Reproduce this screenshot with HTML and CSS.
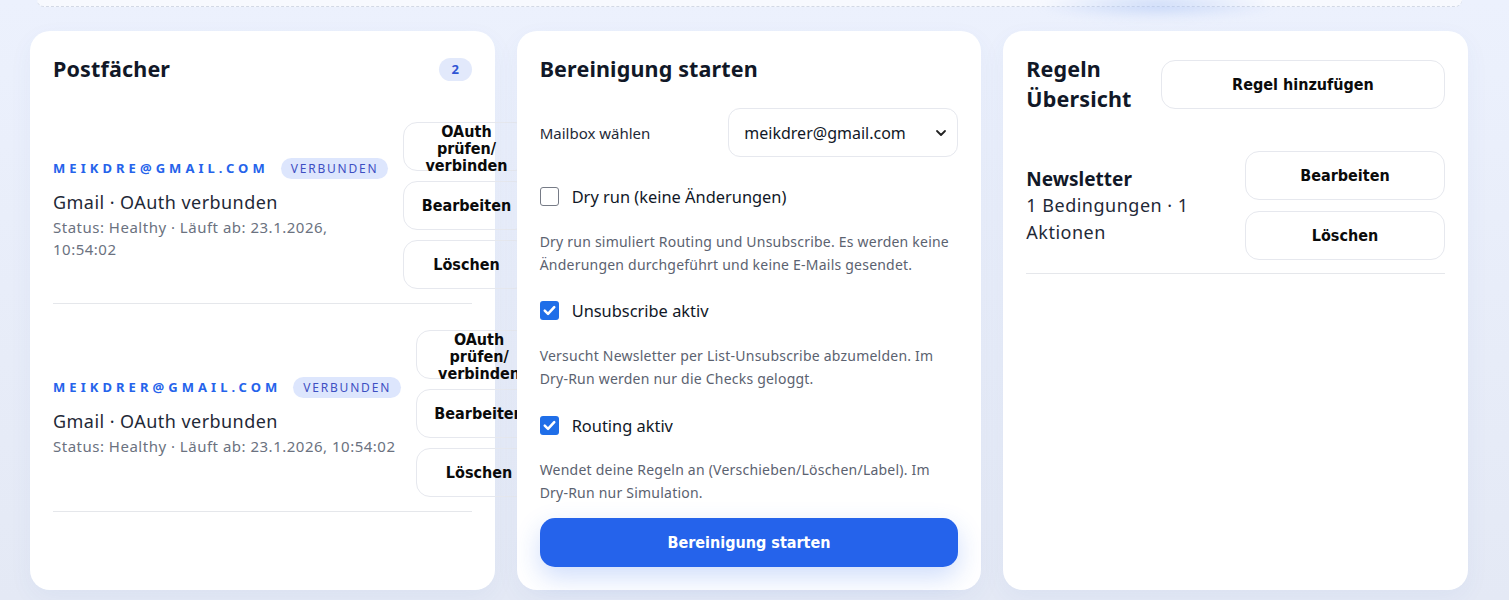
FILE: index.html
```html
<!DOCTYPE html>
<html lang="de">
<head>
<meta charset="utf-8">
<title>Mail Cleanup</title>
<link rel="stylesheet" href="styles.css">
</head>
<body>
<div class="topbar"><span class="topbar-glow"></span></div>
<main class="grid">
  <section class="card">
    <header class="card-head">
      <h2 class="card-title">Postfächer</h2>
      <span class="count">2</span>
    </header>
    <div class="list">
      <div class="mbox">
        <div class="mbox-info">
          <div class="mbox-line">
            <span class="mbox-email">meikdre@gmail.com</span>
            <span class="pill">Verbunden</span>
          </div>
          <div class="mbox-title">Gmail · OAuth verbunden</div>
          <div class="mbox-status">Status: Healthy · Läuft ab: 23.1.2026, 10:54:02</div>
        </div>
        <div class="actions">
          <button class="btn">OAuth prüfen/<wbr>verbinden</button>
          <button class="btn">Bearbeiten</button>
          <button class="btn">Löschen</button>
        </div>
      </div>
      <div class="mbox">
        <div class="mbox-info">
          <div class="mbox-line">
            <span class="mbox-email">meikdrer@gmail.com</span>
            <span class="pill">Verbunden</span>
          </div>
          <div class="mbox-title">Gmail · OAuth verbunden</div>
          <div class="mbox-status">Status: Healthy · Läuft ab: 23.1.2026, 10:54:02</div>
        </div>
        <div class="actions">
          <button class="btn">OAuth prüfen/<wbr>verbinden</button>
          <button class="btn">Bearbeiten</button>
          <button class="btn">Löschen</button>
        </div>
      </div>
    </div>
  </section>

  <section class="card">
    <h2 class="card-title">Bereinigung starten</h2>
    <div class="field">
      <span class="field-label">Mailbox wählen</span>
      <div class="select">
        <span>meikdrer@gmail.com</span>
        <svg class="chev" width="12" height="8" viewBox="0 0 12 8"><path d="M2 2 L6 6 L10 2" fill="none" stroke="#222" stroke-width="1.8" stroke-linecap="round" stroke-linejoin="round"/></svg>
      </div>
    </div>
    <label class="check first"><span class="box"></span><span>Dry run (keine Änderungen)</span></label>
    <p class="desc">Dry run simuliert Routing und Unsubscribe. Es werden keine Änderungen durchgeführt und keine E-Mails gesendet.</p>
    <label class="check"><span class="box on"><svg width="18" height="18" viewBox="0 0 18 18"><path d="M4.5 9.2 L7.6 12.2 L13.5 5.8" fill="none" stroke="#fff" stroke-width="2.4" stroke-linecap="round" stroke-linejoin="round"/></svg></span><span>Unsubscribe aktiv</span></label>
    <p class="desc">Versucht Newsletter per List-Unsubscribe abzumelden. Im Dry-Run werden nur die Checks geloggt.</p>
    <label class="check third"><span class="box on"><svg width="18" height="18" viewBox="0 0 18 18"><path d="M4.5 9.2 L7.6 12.2 L13.5 5.8" fill="none" stroke="#fff" stroke-width="2.4" stroke-linecap="round" stroke-linejoin="round"/></svg></span><span>Routing aktiv</span></label>
    <p class="desc last">Wendet deine Regeln an (Verschieben/Löschen/Label). Im Dry-Run nur Simulation.</p>
    <button class="primary">Bereinigung starten</button>
  </section>

  <section class="card">
    <header class="rules-head">
      <h2 class="card-title">Regeln Übersicht</h2>
      <button class="btn add">Regel hinzufügen</button>
    </header>
    <div class="list rules">
      <div class="rule">
        <div class="rule-info">
          <div class="rule-name">Newsletter</div>
          <div class="rule-meta">1 Bedingungen · 1 Aktionen</div>
        </div>
        <div class="actions wide">
          <button class="btn">Bearbeiten</button>
          <button class="btn">Löschen</button>
        </div>
      </div>
    </div>
  </section>
</main>
</body>
</html>
```

FILE: styles.css
```css
* { box-sizing: border-box; }

html, body { height: 100%; }

body {
  margin: 0;
  overflow: hidden;
  font-family: "Noto Sans", "Open Sans", sans-serif;
  color: #1f2937;
  background: linear-gradient(180deg, #ecf1fd 0%, #e7ecf8 60%, #e4e9f5 100%);
}

.topbar {
  position: relative;
  height: 7px;
  margin: 0 47px 0 37px;
  background: #f7f9fe;
  border-bottom: 1px dashed #d3d9e5;
  border-radius: 0 0 14px 14px;
}

.topbar-glow {
  position: absolute;
  left: 1000px;
  top: -10px;
  width: 240px;
  height: 30px;
  border-radius: 50%;
  background: radial-gradient(ellipse at center, rgba(170, 195, 245, 0.55) 0%, rgba(170, 195, 245, 0) 70%);
  filter: blur(4px);
}

.grid {
  display: grid;
  grid-template-columns: repeat(3, minmax(0, 1fr));
  width: 1468px;
  gap: 22px;
  padding: 24px 0 0 30px;
}

.card {
  min-width: 0;
  background: #fff;
  border-radius: 20px;
  padding: 23px;
  height: 559px;
  box-shadow: 0 8px 24px rgba(60, 90, 170, 0.05);
  display: flex;
  flex-direction: column;
}

.card-head {
  display: flex;
  align-items: center;
  justify-content: space-between;
}

.card-title {
  margin: 0;
  font-size: 21.5px;
  letter-spacing: 0.15px;
  line-height: 30px;
  font-weight: 700;
  color: #111827;
}

.count {
  display: inline-flex;
  align-items: center;
  justify-content: center;
  width: 33px;
  height: 23px;
  border-radius: 12px;
  background: #e2e9fb;
  color: #2f55d4;
  font-size: 13px;
  font-weight: 700;
}

.list {
  display: flex;
  flex-direction: column;
  gap: 12px;
  margin-top: 24px;
}

.mbox {
  display: flex;
  align-items: center;
  gap: 15px;
  padding: 14px 0;
  border-bottom: 1px solid #e5e7eb;
}

.mbox-info {
  flex: 1 1 auto;
  padding-top: 6px;
}

.mbox-line {
  display: flex;
  align-items: center;
  gap: 12px;
  white-space: nowrap;
  height: 22px;
  margin-bottom: 9px;
}

.mbox-email {
  font-size: 13px;
  font-weight: 700;
  letter-spacing: 4.05px;
  text-transform: uppercase;
  color: #2563eb;
}

.pill {
  display: inline-flex;
  align-items: center;
  height: 21px;
  padding: 0 10px;
  border-radius: 11px;
  background: #dde6fd;
  color: #3d4fc2;
  font-size: 12px;
  letter-spacing: 1.8px;
  text-transform: uppercase;
}

.mbox-title {
  font-size: 18px;
  letter-spacing: 0.45px;
  line-height: 28px;
  color: #1f2937;
}

.mbox-status {
  font-size: 15px;
  letter-spacing: 0.5px;
  line-height: 22px;
  color: #6b7280;
}

.actions {
  flex: 0 0 126px;
  display: flex;
  flex-direction: column;
  gap: 10px;
}

.actions.wide {
  flex: 0 0 200px;
  gap: 11px;
}

.btn {
  height: 49px;
  padding: 0 12px;
  border: 1px solid #e6e8ee;
  border-radius: 14px;
  background: transparent;
  font-family: "DejaVu Sans Condensed", "DejaVu Sans", sans-serif;
  font-stretch: condensed;
  font-weight: 700;
  font-size: 16px;
  line-height: 17px;
  color: #0b0b0b;
  text-align: center;
}

.field {
  display: flex;
  align-items: center;
  justify-content: space-between;
  margin-top: 24px;
  height: 49px;
}

.field-label {
  font-size: 15px;
  color: #1f2937;
}

.select {
  width: 230px;
  height: 49px;
  border: 1px solid #e6e8ee;
  border-radius: 12px;
  display: flex;
  align-items: center;
  justify-content: space-between;
  padding: 0 10px 0 15px;
  font-size: 16px;
  color: #111827;
}

.check {
  display: flex;
  align-items: center;
  gap: 13px;
  height: 24px;
  margin-top: 22px;
  font-size: 16.4px;
  color: #111827;
}

.check.first { margin-top: 27px; }
.check.third { margin-top: 23px; }

.box {
  width: 19px;
  height: 19px;
  border: 1px solid #767b86;
  border-radius: 3px;
  background: #fff;
  flex: none;
  display: flex;
}

.box.on {
  border: none;
  background: #1f6ee8;
}

.box svg { display: block; width: 19px; height: 19px; }

.desc {
  margin: 22px 0 0;
  font-size: 14px;
  letter-spacing: 0.22px;
  line-height: 23px;
  color: #5b6270;
}

.desc.last { margin-top: 21px; }

.primary {
  margin-top: 14px;
  height: 49px;
  flex: none;
  border: none;
  border-radius: 15px;
  background: #2563eb;
  color: #fff;
  font-family: "DejaVu Sans Condensed", "DejaVu Sans", sans-serif;
  font-stretch: condensed;
  font-weight: 700;
  font-size: 16px;
  box-shadow: 0 10px 26px rgba(37, 99, 235, 0.22);
}

.rules-head {
  display: flex;
  align-items: center;
  gap: 30px;
}

.rules-head .card-title {
  flex: 1 1 0;
  min-width: 0;
}

.btn.add {
  flex: 0 0 284px;
}

.rules { margin-top: 23px; }

.rule {
  display: flex;
  align-items: center;
  gap: 20px;
  padding: 14px 0 13px;
  border-bottom: 1px solid #e5e7eb;
}

.rule-info { flex: 1 1 auto; }

.rule-name {
  font-size: 19px;
  line-height: 26px;
  font-weight: 700;
  color: #111827;
}

.rule-meta {
  font-size: 18px;
  letter-spacing: 0.5px;
  line-height: 27px;
  color: #1f2937;
}
```
